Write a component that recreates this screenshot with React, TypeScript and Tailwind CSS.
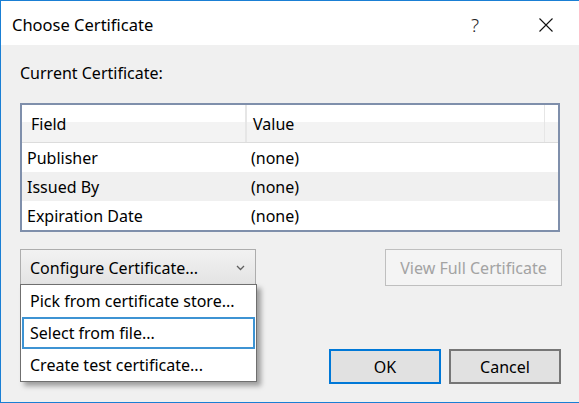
const rows = [
  { field: "Publisher", value: "(none)" },
  { field: "Issued By", value: "(none)" },
  { field: "Expiration Date", value: "(none)" },
];

const menuItems = ["Pick from certificate store...", "Select from file...", "Create test certificate..."];

export default function App() {
  return (
    <div className="h-[403px] w-[579px] overflow-hidden font-['Noto_Sans',sans-serif] text-[16px] leading-[22px] text-black">
      <div className="flex h-full flex-col border-y border-l border-[#1a7fd4]">
        {/* title bar */}
        <div className="flex h-[44px] shrink-0 items-center bg-white pl-[11px] pt-[3px]">
          <span className="text-[16.5px]">Choose Certificate</span>
          <span className="ml-auto w-[14px] text-center text-[19px] font-light text-[#222]">?</span>
          <svg className="ml-[57px] mr-[26px] h-[14px] w-[14px]" viewBox="0 0 14 14">
            <path d="M0.5 0.5 L13.5 13.5 M13.5 0.5 L0.5 13.5" stroke="#111" strokeWidth="1.1" fill="none" />
          </svg>
        </div>

        <div className="relative flex flex-1 flex-col bg-[#f0f0f0] px-[19px]">
          <div className="mt-[17px]">Current Certificate:</div>

          {/* certificate table */}
          <div className="mt-[19px] border-2 border-[#7f8fab] bg-white">
            <div className="flex h-[38px] border-b border-[#dcdcdc] bg-[linear-gradient(to_bottom,#ffffff_45%,#f3f3f3_45%)]">
              <div className="flex w-[225px] items-center border-r-2 border-[#e6e6e6] pl-[9px]">Field</div>
              <div className="flex w-[298px] items-center border-r border-[#e6e6e6] pl-[6px]">Value</div>
              <div className="flex-1" />
            </div>
            {rows.map((r, i) => (
              <div
                key={r.field}
                className={"grid h-[29px] grid-cols-[229px_1fr] items-center " + (i === 1 ? "bg-[#f0f0f0]" : "bg-white")}
              >
                <span className="pl-[5px]">{r.field}</span>
                <span>{r.value}</span>
              </div>
            ))}
          </div>

          {/* action buttons */}
          <div className="mt-[17px] flex justify-between">
            <div className="flex h-[37px] w-[236px] items-center border border-[#adadad] bg-gradient-to-b from-[#f2f2f2] to-[#e3e3e3] pl-[9px] pr-[10px]">
              <span>Configure Certificate...</span>
              <svg className="ml-auto h-[6px] w-[9px]" viewBox="0 0 9 6">
                <path d="M1 1 L4.5 4.5 L8 1" stroke="#606060" strokeWidth="1.3" fill="none" />
              </svg>
            </div>
            <div className="mr-[-2px] flex h-[37px] w-[177px] items-center justify-center border border-[#bfbfbf] bg-[#f4f4f4] text-[#a3a3a3]">
              View Full Certificate
            </div>
          </div>

          {/* dropdown menu */}
          <div className="absolute left-[19px] top-[239px] w-[237px] border border-[#6f6f6f] bg-white shadow-[4px_4px_5px_rgba(0,0,0,0.35)]">
            {menuItems.map((m, i) => (
              <div
                key={m}
                className={
                  "flex h-[32px] items-center " +
                  (i === 1 ? "mx-[1px] border-2 border-[#3d93d3] pl-[6px]" : "pl-[9px]")
                }
              >
                {m}
              </div>
            ))}
          </div>

          {/* dialog buttons */}
          <div className="mb-[18px] mr-[-1px] mt-auto flex justify-end gap-[8px]">
            <div className="flex h-[35px] w-[112px] items-center justify-center border-2 border-[#0078d7] bg-[#e1e1e1]">OK</div>
            <div className="flex h-[35px] w-[112px] items-center justify-center border-2 border-[#767676] bg-[#e1e1e1]">Cancel</div>
          </div>
        </div>
      </div>
    </div>
  );
}
